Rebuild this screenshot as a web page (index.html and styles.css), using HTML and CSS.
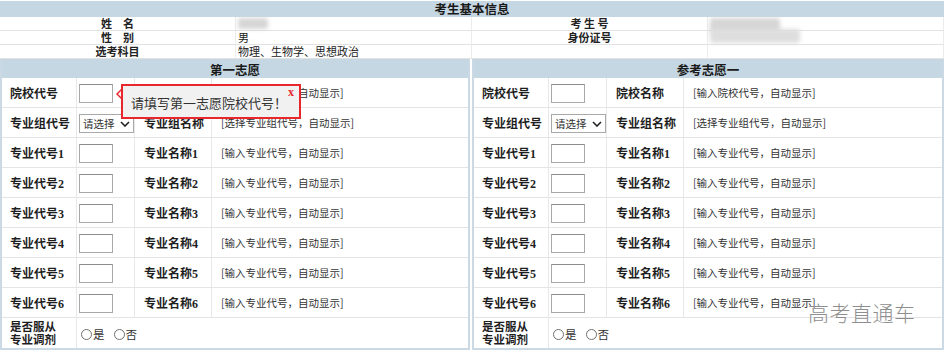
FILE: index.html
```html
<!DOCTYPE html>
<html lang="zh-CN">
<head>
<meta charset="utf-8">
<title>考生基本信息</title>
<link rel="stylesheet" href="styles.css">
</head>
<body>
<div class="page">
  <section class="info">
    <div class="bar">考生基本信息</div>
    <div class="info-grid">
      <div class="ilabel">姓　名</div>
      <div class="ivalue"><span class="blur blur-name"></span></div>
      <div class="ilabel">考 生 号</div>
      <div class="ivalue"><span class="blur blur-no"></span></div>

      <div class="ilabel">性　别</div>
      <div class="ivalue">男</div>
      <div class="ilabel">身份证号</div>
      <div class="ivalue"><span class="blur blur-id"></span></div>

      <div class="ilabel">选考科目</div>
      <div class="ivalue">物理、生物学、思想政治</div>
      <div class="ilabel"></div>
      <div class="ivalue"></div>
    </div>
  </section>

  <div class="panels">
    <section class="panel">
      <div class="pbar">第一志愿</div>
      <div class="pgrid">
        <div class="c lab">院校代号</div>
        <div class="c inp"><input class="code" type="text"></div>
        <div class="c lab2">院校名称</div>
        <div class="c val">[输入院校代号，自动显示]</div>

        <div class="c lab">专业组代号</div>
        <div class="c inp"><span class="sel"><select><option>请选择</option></select><svg class="chev" width="10" height="6" viewBox="0 0 10 6"><path d="M1 1 L5 5 L9 1" fill="none" stroke="#222" stroke-width="1.6"/></svg></span></div>
        <div class="c lab2">专业组名称</div>
        <div class="c val">[选择专业组代号，自动显示]</div>

        <div class="c lab">专业代号1</div><div class="c inp"><input class="code" type="text"></div><div class="c lab2">专业名称1</div><div class="c val">[输入专业代号，自动显示]</div>
        <div class="c lab">专业代号2</div><div class="c inp"><input class="code" type="text"></div><div class="c lab2">专业名称2</div><div class="c val">[输入专业代号，自动显示]</div>
        <div class="c lab">专业代号3</div><div class="c inp"><input class="code" type="text"></div><div class="c lab2">专业名称3</div><div class="c val">[输入专业代号，自动显示]</div>
        <div class="c lab">专业代号4</div><div class="c inp"><input class="code" type="text"></div><div class="c lab2">专业名称4</div><div class="c val">[输入专业代号，自动显示]</div>
        <div class="c lab">专业代号5</div><div class="c inp"><input class="code" type="text"></div><div class="c lab2">专业名称5</div><div class="c val">[输入专业代号，自动显示]</div>
        <div class="c lab">专业代号6</div><div class="c inp"><input class="code" type="text"></div><div class="c lab2">专业名称6</div><div class="c val">[输入专业代号，自动显示]</div>

        <div class="c lab lab-two">是否服从<br>专业调剂</div>
        <div class="c radios">
          <label class="rad"><input type="radio" name="tj1">是</label>
          <label class="rad"><input type="radio" name="tj1">否</label>
        </div>
      </div>
      <div class="tip">
        <span class="tip-arrow"></span>
        <span class="tip-text">请填写第一志愿院校代号！</span>
        <span class="tip-x">x</span>
      </div>
    </section>

    <section class="panel">
      <div class="pbar">参考志愿一</div>
      <div class="pgrid">
        <div class="c lab">院校代号</div>
        <div class="c inp"><input class="code" type="text"></div>
        <div class="c lab2">院校名称</div>
        <div class="c val">[输入院校代号，自动显示]</div>

        <div class="c lab">专业组代号</div>
        <div class="c inp"><span class="sel"><select><option>请选择</option></select><svg class="chev" width="10" height="6" viewBox="0 0 10 6"><path d="M1 1 L5 5 L9 1" fill="none" stroke="#222" stroke-width="1.6"/></svg></span></div>
        <div class="c lab2">专业组名称</div>
        <div class="c val">[选择专业组代号，自动显示]</div>

        <div class="c lab">专业代号1</div><div class="c inp"><input class="code" type="text"></div><div class="c lab2">专业名称1</div><div class="c val">[输入专业代号，自动显示]</div>
        <div class="c lab">专业代号2</div><div class="c inp"><input class="code" type="text"></div><div class="c lab2">专业名称2</div><div class="c val">[输入专业代号，自动显示]</div>
        <div class="c lab">专业代号3</div><div class="c inp"><input class="code" type="text"></div><div class="c lab2">专业名称3</div><div class="c val">[输入专业代号，自动显示]</div>
        <div class="c lab">专业代号4</div><div class="c inp"><input class="code" type="text"></div><div class="c lab2">专业名称4</div><div class="c val">[输入专业代号，自动显示]</div>
        <div class="c lab">专业代号5</div><div class="c inp"><input class="code" type="text"></div><div class="c lab2">专业名称5</div><div class="c val">[输入专业代号，自动显示]</div>
        <div class="c lab">专业代号6</div><div class="c inp"><input class="code" type="text"></div><div class="c lab2">专业名称6</div><div class="c val">[输入专业代号，自动显示]</div>

        <div class="c lab lab-two">是否服从<br>专业调剂</div>
        <div class="c radios">
          <label class="rad"><input type="radio" name="tj2">是</label>
          <label class="rad"><input type="radio" name="tj2">否</label>
        </div>
      </div>
      <div class="watermark">高考直通车</div>
    </section>
  </div>
</div>
</body>
</html>
```

FILE: styles.css
```css
* { box-sizing: border-box; }
html, body { margin: 0; padding: 0; background: #fff; }
body {
  font-family: "Liberation Serif", "Noto Sans CJK SC", serif;
  color: #222;
  width: 944px;
  height: 350px;
  overflow: hidden;
}
.page { width: 944px; }

/* top info */
.info { width: 944px; }
.bar {
  margin-top: 1px;
  height: 16px;
  background: #c5d7e3;
  font-family: "Noto Sans CJK SC", sans-serif;
  font-weight: bold;
  font-size: 12.5px;
  line-height: 16px;
  text-align: center;
  color: #1a1a1a;
}
.info-grid {
  display: grid;
  grid-template-columns: 236px 236px 236px 236px;
  grid-auto-rows: 14px;
}
.ilabel, .ivalue {
  border-bottom: 1px solid #e2e2e2;
  font-family: "Noto Sans CJK SC", sans-serif;
  font-size: 11px;
  line-height: 13px;
  position: relative;
}
.ilabel {
  text-align: center;
  font-weight: bold;
  border-right: 1px solid #ececec;
}
.ivalue { padding-left: 2px; border-right: 1px solid #ececec; }
.blur {
  position: absolute;
  background: #d6d6d6;
  filter: blur(2px);
  border-radius: 3px;
}
.blur-name { left: 2px; top: 1px; width: 30px; height: 11px; }
.blur-no { left: 2px; top: 1px; width: 70px; height: 15px; }
.blur-id { left: 2px; top: -2px; width: 90px; height: 14px; background: #dedede; }

/* panels */
.panels {
  display: flex;
  gap: 2px;
}
.panel {
  position: relative;
  border: 2px solid #cad9e4;
  border-top-color: #c5d7e3;
}
.panel:first-child { width: 470px; }
.panel:last-child { width: 472px; }
.pbar {
  height: 17px;
  background: #c5d7e3;
  font-family: "Noto Sans CJK SC", sans-serif;
  font-weight: bold;
  font-size: 12.5px;
  line-height: 17px;
  text-align: center;
  color: #1a1a1a;
}
.pgrid {
  display: grid;
  grid-template-columns: 75px 58px 77px 1fr;
  grid-auto-rows: 30px;
}
.c {
  display: flex;
  align-items: center;
  border-bottom: 1px solid #e4e4e4;
  border-right: 1px solid #e8e8e8;
  font-size: 12px;
}
.c.val { border-right: none; }
.pgrid > .c:nth-last-child(-n+2) { border-bottom: none; }
.lab, .lab2 {
  font-family: "Liberation Serif", "Noto Sans CJK SC", serif;
  font-weight: bold;
  font-size: 12px;
  color: #1e1e1e;
}
.lab { padding-left: 8px; }
.lab2 { padding-left: 9px; }
.lab-two { line-height: 13px; font-size: 11.5px; padding-top: 2px; }
.inp { padding-left: 2px; }
.val {
  padding-left: 9px;
  font-family: "Noto Sans CJK SC", sans-serif;
  font-size: 10.5px;
  color: #333;
}
.code {
  width: 34px;
  height: 19px;
  margin: 1px 0 0 0;
  padding: 0;
  border: 1px solid #a9a9a9;
  border-top-color: #8c8c8c;
  background: #fff;
  outline: none;
}
.sel {
  position: relative;
  display: inline-block;
  width: 55px;
  height: 19px;
  margin-top: 1px;
}
.sel select {
  appearance: none;
  -webkit-appearance: none;
  width: 55px;
  height: 19px;
  margin: 0;
  padding: 0 0 0 3px;
  border: 1px solid #a9a9a9;
  border-radius: 0;
  background: #fff;
  font-family: "Noto Sans CJK SC", sans-serif;
  font-size: 10.5px;
  line-height: 17px;
  color: #333;
}
.chev {
  position: absolute;
  right: 4px;
  top: 7px;
  pointer-events: none;
}
.radios {
  grid-column: 2 / span 3;
  border-right: none;
  padding-left: 4px;
  padding-top: 2px;
  gap: 9px;
  font-family: "Noto Sans CJK SC", sans-serif;
  font-size: 11.5px;
  color: #333;
}
.rad { display: flex; align-items: center; }
.rad input {
  appearance: none;
  -webkit-appearance: none;
  width: 11px;
  height: 11px;
  margin: 0 1px 0 0;
  border: 1px solid #707070;
  border-radius: 50%;
  background: #fff;
}

/* tooltip over the first field */
.tip {
  position: absolute;
  left: 119px;
  top: 23px;
  width: 180px;
  height: 35px;
  border: 2px solid #e8262b;
  background: #f1f1f1;
  display: flex;
  align-items: center;
  padding-left: 8px;
  padding-top: 2px;
}
.tip-text {
  font-family: "Noto Sans CJK SC", sans-serif;
  font-size: 13px;
  color: #333;
}
.tip-arrow {
  position: absolute;
  left: -7px;
  top: 3px;
  width: 0;
  height: 0;
  border-top: 5px solid transparent;
  border-bottom: 5px solid transparent;
  border-right: 5px solid #e8262b;
}
.tip-arrow::after {
  content: "";
  position: absolute;
  left: 2px;
  top: -3px;
  border-top: 3px solid transparent;
  border-bottom: 3px solid transparent;
  border-right: 3px solid #fff;
}
.tip-x {
  position: absolute;
  right: 5px;
  top: -1px;
  font-family: "Liberation Serif", serif;
  font-weight: bold;
  font-size: 12px;
  color: #e8262b;
}
.watermark {
  position: absolute;
  left: 334px;
  top: 236px;
  font-family: "Noto Sans CJK SC", sans-serif;
  font-weight: 300;
  font-size: 21px;
  letter-spacing: 0.5px;
  color: #8e8e8e;
  text-shadow: 0 0 1px #fff;
}
```
